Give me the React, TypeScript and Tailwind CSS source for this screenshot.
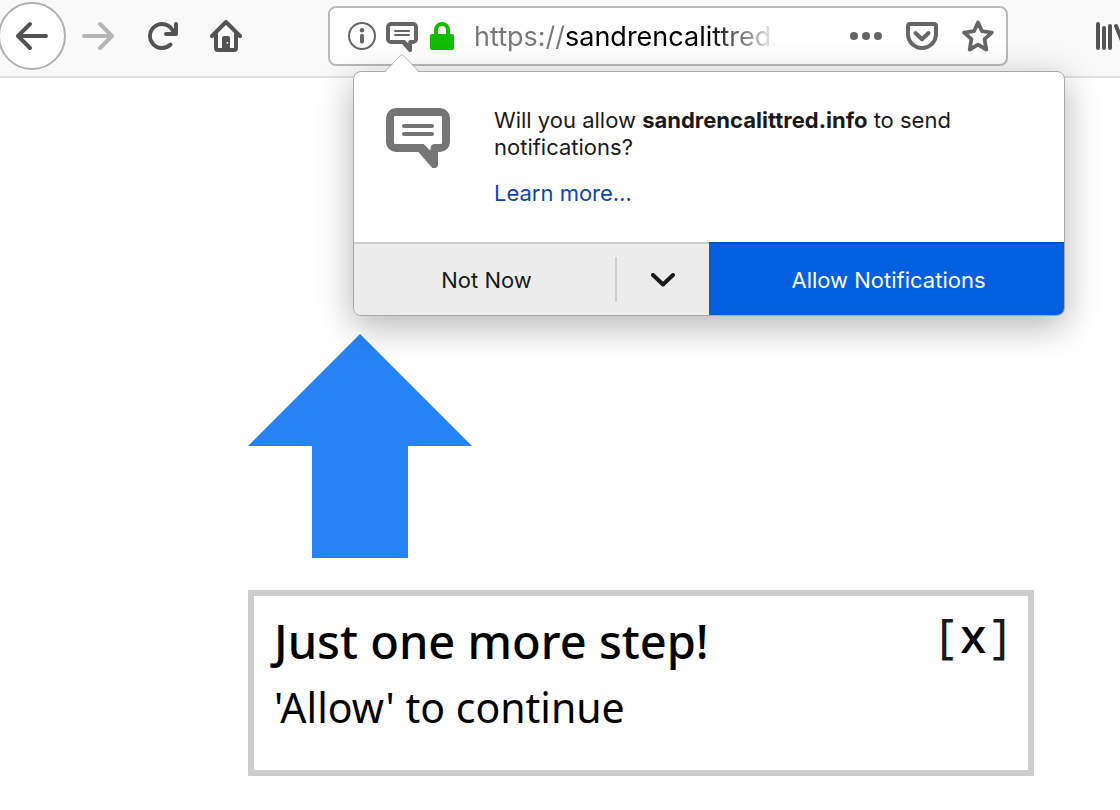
import React from "react";

function ChatIcon({ className }: { className: string }) {
  return (
    <svg viewBox="0 0 16 15" className={className} fill="currentColor" aria-hidden="true">
      <path
        fillRule="evenodd"
        d="M2.5 0h11A2.5 2.5 0 0 1 16 2.5v6a2.5 2.5 0 0 1-2.5 2.5H13v3.2a.95.95 0 0 1-1.7.5L8.1 11H2.5A2.5 2.5 0 0 1 0 8.500v-6A2.500 2.500 0 0 1 2.500 0zM2.300 2a.3.3 0 0 0-.3.3v6.400a.3.3 0 0 0 .3.3H9.400l1.700 1.700C11.100 9.600 11.300 9 12.300 9h1.400a.3.3 0 0 0 .3-.3V2.300a.3.3 0 0 0-.3-.3z"
      />
      <rect x="4" y="4" width="8" height="1" rx="0.5" />
      <rect x="4" y="6" width="8" height="1" rx="0.5" />
    </svg>
  );
}

const backPath =
  "M15 7H3.414l4.293-4.293a1 1 0 0 0-1.414-1.414l-6 6a1 1 0 0 0 0 1.414l6 6a1 1 0 0 0 1.414-1.414L3.414 9H15a1 1 0 0 0 0-2z";

function Toolbar() {
  return (
    <header className="flex items-center border-b-2 border-[#e0e0e0] bg-[#f9f9f9] pb-1">
      <nav aria-label="Browser" className="flex h-18 shrink-0 items-center text-[#535353]">
        <button
          aria-label="Back"
          className="-ml-0.5 flex size-17 items-center justify-center rounded-full border-2 border-[#b1b1b1] bg-white"
        >
          <svg viewBox="0 0 16 16" className="size-8" fill="currentColor">
            <path d={backPath} />
          </svg>
        </button>
        <button aria-label="Forward" className="flex size-16 items-center justify-center text-[#b5b5b5]">
          <svg viewBox="0 0 16 16" className="size-8" fill="currentColor">
            <path d={backPath} transform="matrix(-1 0 0 1 16 0)" />
          </svg>
        </button>
        <button aria-label="Reload" className="flex size-16 items-center justify-center">
          <svg viewBox="0 0 16 16" className="size-8" fill="currentColor">
            <path d="M15 1a1 1 0 0 0-1 1v2.418A6.995 6.995 0 1 0 8 15a6.954 6.954 0 0 0 4.950-2.050 1 1 0 0 0-1.414-1.414A5.019 5.019 0 1 1 12.549 6H10a1 1 0 0 0 0 2h5a1 1 0 0 0 1-1V2a1 1 0 0 0-1-1z" />
          </svg>
        </button>
        <button aria-label="Home" className="flex size-16 items-center justify-center">
          <svg viewBox="0 0 16 16" className="size-8" fill="none" stroke="currentColor" strokeWidth="2" strokeLinecap="round" strokeLinejoin="round">
            <path d="M1 8L8 1l7 7" />
            <path d="M3 7v7a1 1 0 0 0 1 1h8a1 1 0 0 0 1-1V7" />
            <path fill="currentColor" stroke="none" fillRule="evenodd" d="M7 8h2a1 1 0 0 1 1 1v6H6V9a1 1 0 0 1 1-1zm1.300 3v.8h.8V11z" />
          </svg>
        </button>
      </nav>

      <div className="relative ml-[70px] flex h-15 min-w-0 flex-1 items-center rounded-lg border-2 border-[#b9b9b9] bg-white pl-[18px] text-[#666666]">
        <button aria-label="Site information" className="shrink-0">
          <svg viewBox="0 0 28 28" className="size-7">
            <circle cx="14" cy="14" r="13" fill="none" stroke="currentColor" strokeWidth="2" />
            <circle cx="14" cy="8.200" r="2.200" fill="currentColor" />
            <rect x="12" y="12" width="4" height="9.500" rx="1.800" fill="currentColor" />
          </svg>
        </button>
        <button aria-label="Notification permission" className="ml-2.5 shrink-0 pt-0.5">
          <ChatIcon className="w-8" />
        </button>
        <svg viewBox="0 0 24 28" className="ml-3 h-7 w-6 shrink-0 text-[#12bc00]" aria-label="Secure connection" role="img">
          <rect y="12" width="24" height="16" rx="2" fill="currentColor" />
          <path d="M6 13V8a6 6 0 0 1 12 0v5" fill="none" stroke="currentColor" strokeWidth="4" />
        </svg>
        <input
          aria-label="Address"
          defaultValue="https://sandrencalittred.info"
          className="ml-5 min-w-0 flex-1 bg-[linear-gradient(90deg,#777_0,#777_91px,#000_91px,#000_235px,transparent_304px)] bg-clip-text pt-0.5 text-[27px] text-transparent outline-none"
        />
        <button aria-label="Page actions" className="flex h-14 w-14 shrink-0 items-center justify-center">
          <svg viewBox="0 0 32 32" className="size-8" fill="currentColor">
            <circle cx="4" cy="16" r="4" />
            <circle cx="16" cy="16" r="4" />
            <circle cx="28" cy="16" r="4" />
          </svg>
        </button>
        <button aria-label="Save to Pocket" className="flex h-14 w-14 shrink-0 items-center justify-center">
          <svg viewBox="0 0 32 32" className="size-8" fill="none" stroke="currentColor" strokeWidth="4" strokeLinecap="round" strokeLinejoin="round">
            <path d="M4 4h24a2 2 0 0 1 2 2v8a14 14 0 0 1-28 0V6a2 2 0 0 1 2-2z" />
            <path d="M9.500 13l6.500 6.300 6.500-6.300" />
          </svg>
        </button>
        <button aria-label="Bookmark" className="flex h-14 w-14 shrink-0 items-center justify-center">
          <svg viewBox="0 0 32 32" className="size-8" fill="none" stroke="currentColor" strokeWidth="3.800" strokeLinejoin="round">
            <path d="M16 2.500l4 8.700 9.800 1.400-7.200 6.600 1.700 10.300-8.300-4.800-8.300 4.800 1.700-10.300-7.200-6.600 9.800-1.400z" />
          </svg>
        </button>
        <PermissionPopup />
      </div>

      <button aria-label="Library" className="ml-22 w-6 shrink-0 overflow-hidden text-[#535353]">
        <svg viewBox="0 0 32 32" className="h-8 w-8" fill="none" stroke="currentColor" strokeWidth="4" strokeLinecap="round">
          <path d="M2 4v24M8 8v20M14 6v22M20 6l9 22" />
        </svg>
      </button>
    </header>
  );
}

function PermissionPopup() {
  return (
    <section
      aria-label="Notification permission request"
      className="absolute top-[63px] left-[23px] w-[712px] rounded-lg border border-[#a9a9a9] bg-white text-[22px] leading-[27px] text-[#1a1a1a] shadow-[0_10px_36px_rgba(0,0,0,0.3)]"
    >
      <svg viewBox="0 0 34 19" className="absolute -top-[18px] left-[31px] h-[19px] w-[34px]" aria-hidden="true">
        <path d="M0 18.500L15.500 1.500q1.500-1.500 3 0L34 18.500V19H0z" fill="#fff" />
        <path d="M0 17.500L15.500 1.500q1.500-1.500 3 0L34 17.500" fill="none" stroke="#b5b5b5" />
      </svg>
      <div className="flex items-center gap-11 px-8 pt-[34px] pb-[34px]">
        <ChatIcon className="mt-0.5 w-16 shrink-0 self-start text-[#757575]" />
        <div className="pr-8 pt-px">
          <p>
            Will you allow <b>sandrencalittred.info</b> to send notifications?
          </p>
          <a href="#" className="mt-[19px] block pb-px text-[#0a47ad]">
            Learn more…
          </a>
        </div>
      </div>
      <div className="grid h-[73px] grid-cols-2 overflow-hidden rounded-b-[7px]">
        <div className="flex items-center border-t-2 border-[#cbcbcb] bg-[#ececec]">
          <button className="h-full flex-1 pt-0.5 pl-1">Not Now</button>
          <span className="h-[45px] w-0.5 bg-[#cbcbcb]" />
          <button aria-label="More options" className="flex h-full w-[92px] items-center justify-center">
            <svg viewBox="0 0 24 14" className="h-[14px] w-6" fill="none" stroke="currentColor" strokeWidth="4" strokeLinecap="round" strokeLinejoin="round">
              <path d="M2 2l10 9.500L22 2" />
            </svg>
          </button>
        </div>
        <button className="border-t-2 border-[#0055c8] bg-[#0060df] pt-0.5 pl-1 text-white">Allow Notifications</button>
      </div>
    </section>
  );
}

export default function App() {
  return (
    <div className="min-h-screen overflow-hidden bg-white font-['Inter',sans-serif]">
      <Toolbar />
      <main className="pt-64 pr-[86px] pl-62 font-['Noto_Sans',sans-serif] text-black">
        <svg viewBox="0 0 224 224" className="size-56" aria-hidden="true">
          <path d="M112 0l112 112h-64v112H64V112H0z" fill="#2783f5" />
        </svg>
        <div className="mt-8 flex items-start justify-between border-6 border-[#cccccc] px-5 pt-3 pb-[30px]">
          <div>
            <h1 className="text-[47px] leading-[66px] font-medium">Just one more step!</h1>
            <p className="text-[41px] leading-[66px]">'Allow' to continue</p>
          </div>
          <button aria-label="Close" className="flex gap-1.5 text-[48px] leading-[54px] text-[#1a1a1a]">
            <span>[</span>
            <span className="font-medium text-black">x</span>
            <span>]</span>
          </button>
        </div>
      </main>
    </div>
  );
}
